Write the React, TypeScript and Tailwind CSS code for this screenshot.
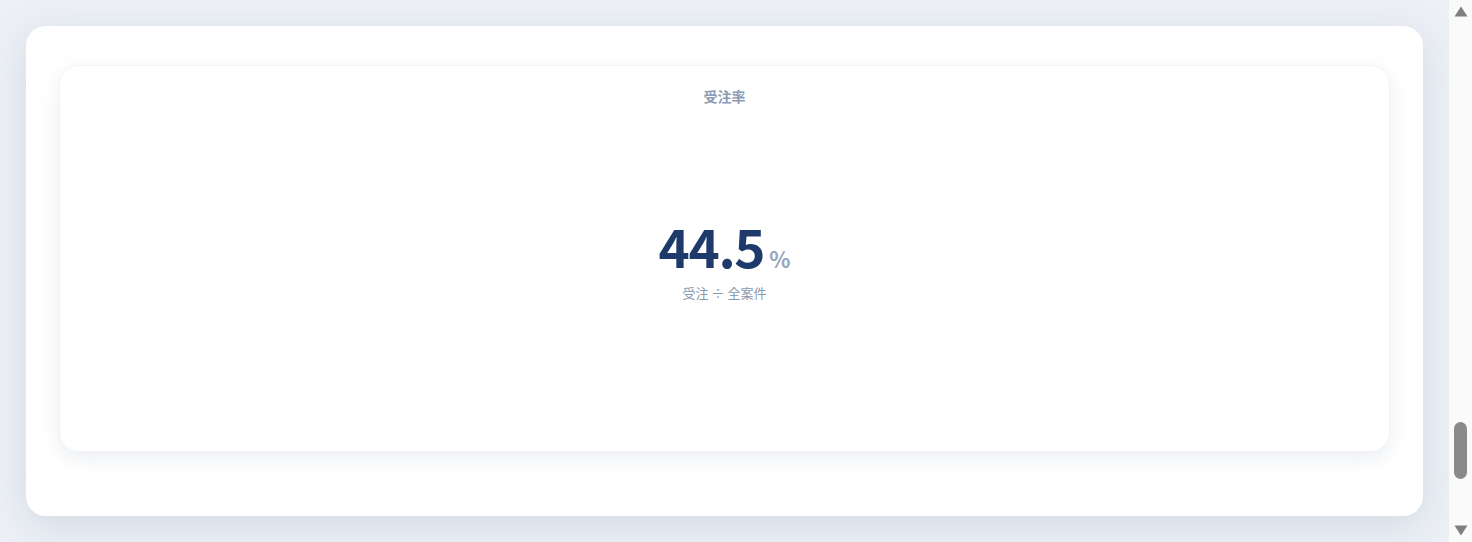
const font = {
  fontFamily: '"Noto Sans CJK JP", "Noto Sans", sans-serif',
}

const RateCard = () => {
  return (
    <div className="flex h-[387px] flex-col items-center rounded-[20px] border border-slate-100 bg-white shadow-[0_6px_20px_rgba(148,163,184,0.2)]">
      <h3 className="pt-[20px] text-[14px] leading-[20px] font-bold text-[#8b9bb4]">受注率</h3>
      <div className="mt-[111px] flex items-baseline">
        <span className="text-[53px] leading-[56px] font-bold tracking-tight text-[#1e3a6b]">44.5</span>
        <span className="ml-[5px] text-[22px] leading-none font-semibold text-[#94a6c0]">%</span>
      </div>
      <p className="mt-[11px] text-[13px] leading-[18px] text-[#8a97ab]">受注 ÷ 全案件</p>
    </div>
  )
}

const Arrow = ({ down = false }: { down?: boolean }) => (
  <svg width="14" height="11" viewBox="0 0 14 11" className={down ? 'rotate-180' : ''}>
    <path d="M7 0.5 L13.5 10.5 L0.5 10.5 Z" fill="#7f7f7f" />
  </svg>
)

const ScrollRail = () => (
  <aside className="flex w-[23px] shrink-0 flex-col items-center bg-[#fafafa] pt-[6px] pb-[6px]">
    <Arrow />
    <div className="flex-1">
      <div className="mt-[405px] h-[57px] w-[13px] rounded-full bg-[#8a8a8a]" />
    </div>
    <Arrow down />
  </aside>
)

const App = () => {
  return (
    <div style={font} className="flex h-screen overflow-hidden bg-[#edf1f6]">
      <main className="flex-1 px-[26px] pt-[26px]">
        <section className="rounded-[20px] bg-white px-[33px] pt-[39px] pb-[64px] shadow-[0_10px_40px_rgba(148,163,184,0.3)]">
          <RateCard />
        </section>
      </main>
      <ScrollRail />
    </div>
  )
}

export default App
